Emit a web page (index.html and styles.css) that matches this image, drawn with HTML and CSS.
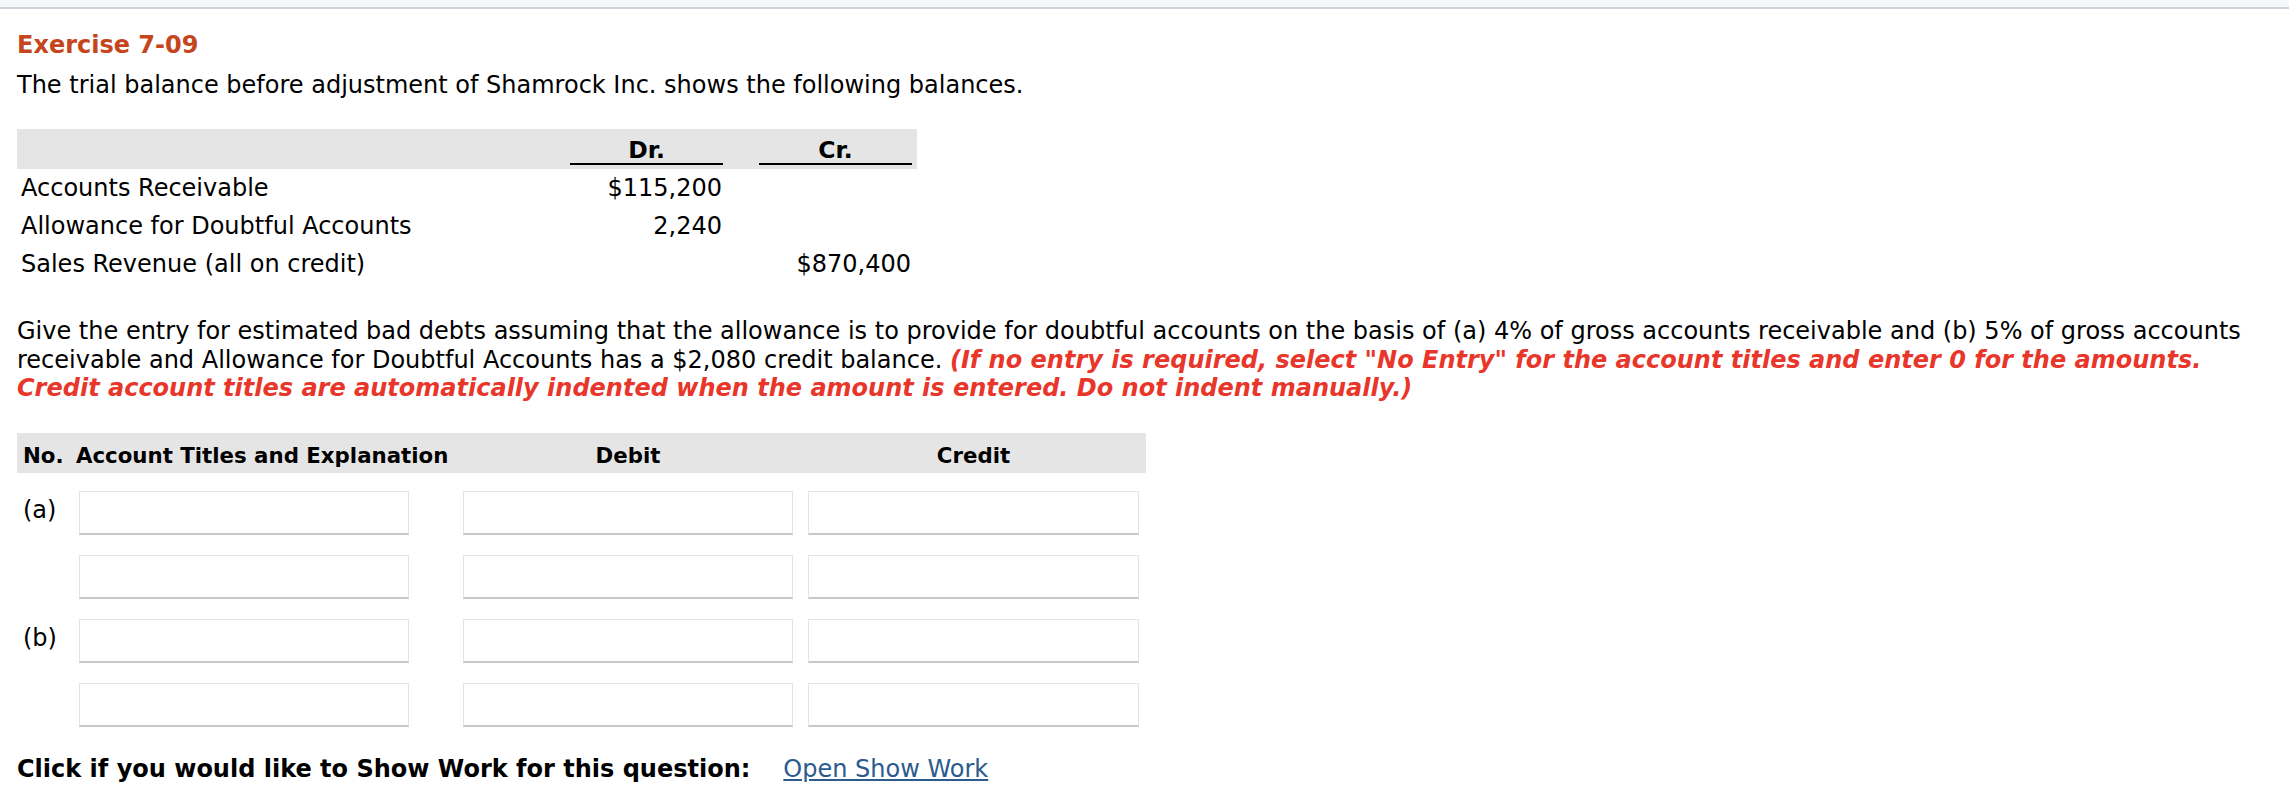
FILE: index.html
```html
<!DOCTYPE html>
<html lang="en">
<head>
<meta charset="utf-8">
<title>Exercise 7-09</title>
<link rel="stylesheet" href="styles.css">
</head>
<body>
<div class="topbar"></div>
<main class="content">
  <h2 class="title">Exercise 7-09</h2>
  <p class="intro">The trial balance before adjustment of Shamrock Inc. shows the following balances.</p>

  <div class="balances">
    <div class="bal-head">
      <div class="blank"></div>
      <div class="colhead">Dr.</div>
      <div class="colhead">Cr.</div>
    </div>
    <div class="bal-row">
      <div class="acct">Accounts Receivable</div>
      <div class="amt">$115,200</div>
      <div class="amt"></div>
    </div>
    <div class="bal-row">
      <div class="acct">Allowance for Doubtful Accounts</div>
      <div class="amt">2,240</div>
      <div class="amt"></div>
    </div>
    <div class="bal-row">
      <div class="acct">Sales Revenue (all on credit)</div>
      <div class="amt"></div>
      <div class="amt">$870,400</div>
    </div>
  </div>

  <p class="prompt">Give the entry for estimated bad debts assuming that the allowance is to provide for doubtful accounts on the basis of (a) 4% of gross accounts receivable and (b) 5% of gross accounts receivable and Allowance for Doubtful Accounts has a $2,080 credit balance. <em class="note">(If no entry is required, select "No Entry" for the account titles and enter 0 for the amounts. Credit account titles are automatically indented when the amount is entered. Do not indent manually.)</em></p>

  <div class="journal">
    <div class="j-head">
      <div class="h-no">No.</div>
      <div class="h-acct">Account Titles and Explanation</div>
      <div class="h-num">Debit</div>
      <div class="h-num">Credit</div>
    </div>
    <div class="j-body">
      <div class="label">(a)</div>
      <input class="field f-acct" type="text" aria-label="Account title (a) line 1">
      <input class="field" type="text" aria-label="Debit (a) line 1">
      <input class="field f-cr" type="text" aria-label="Credit (a) line 1">

      <div class="label"></div>
      <input class="field f-acct" type="text" aria-label="Account title (a) line 2">
      <input class="field" type="text" aria-label="Debit (a) line 2">
      <input class="field f-cr" type="text" aria-label="Credit (a) line 2">

      <div class="label">(b)</div>
      <input class="field f-acct" type="text" aria-label="Account title (b) line 1">
      <input class="field" type="text" aria-label="Debit (b) line 1">
      <input class="field f-cr" type="text" aria-label="Credit (b) line 1">

      <div class="label"></div>
      <input class="field f-acct" type="text" aria-label="Account title (b) line 2">
      <input class="field" type="text" aria-label="Debit (b) line 2">
      <input class="field f-cr" type="text" aria-label="Credit (b) line 2">
    </div>
  </div>

  <p class="showwork"><strong>Click if you would like to Show Work for this question:</strong><a href="#" class="swlink">Open Show Work</a></p>
</main>
</body>
</html>
```

FILE: styles.css
```css
html, body {
  margin: 0;
  padding: 0;
  background: #ffffff;
}

body {
  font-family: Verdana, "DejaVu Sans", sans-serif;
  font-size: 24px;
  color: #000000;
}

.topbar {
  height: 7px;
  background: #f6f7f9;
  border-bottom: 2px solid #cdd4de;
}

.content {
  padding: 0 17px;
}

.title {
  margin: 22px 0 0;
  font-size: 24px;
  font-weight: bold;
  line-height: 28.5px;
  color: #c5461c;
}

.intro {
  margin: 11.5px 0 0;
  line-height: 28.5px;
}

/* trial balance */
.balances {
  width: 900px;
  margin-top: 29px;
}

.bal-head,
.bal-row {
  display: grid;
  grid-template-columns: 517px 153px 153px;
  column-gap: 36px;
  padding-right: 5px;
}

.bal-head {
  background: #e5e5e5;
  padding-bottom: 4px;
  align-items: end;
  height: 40px;
  box-sizing: border-box;
}

.blank {
  height: 36px;
}

.colhead {
  height: 34px;
  border-bottom: 2px solid #000;
  display: flex;
  align-items: flex-end;
  justify-content: center;
  line-height: 1;
  font-size: 23.5px;
  font-weight: bold;
}

.bal-row {
  line-height: 38px;
}

.acct {
  padding-left: 4px;
  white-space: nowrap;
}

.amt {
  text-align: right;
  padding-right: 1px;
}

.prompt {
  margin: 34.5px 0 0;
  line-height: 28.5px;
}

.note {
  color: #e8362b;
  font-weight: bold;
  font-style: italic;
}

/* journal entry table */
.journal {
  width: 1129px;
  margin-top: 30px;
}

.j-head,
.j-body {
  display: grid;
  grid-template-columns: 47px 369px 330px 331px;
  column-gap: 15px;
  padding-right: 7px;
}

.j-head {
  background: #e5e5e5;
  height: 40px;
  box-sizing: border-box;
  padding-top: 10px;
  line-height: 26px;
  font-size: 21.3px;
  font-weight: bold;
  white-space: nowrap;
}

.h-no {
  padding-left: 6px;
}

.h-acct {
  margin-left: -3px;
}

.h-num {
  text-align: center;
}

.j-body {
  margin-top: 18px;
  row-gap: 20px;
}

.label {
  padding-left: 6px;
  padding-top: 5px;
  line-height: 28.5px;
}

.field {
  display: block;
  width: 330px;
  height: 44px;
  box-sizing: border-box;
  margin: 0;
  padding: 0 8px;
  border: 1px solid #e4e4e4;
  border-bottom: 2px solid #c8c8c8;
  border-radius: 0;
  background: #ffffff;
  font: inherit;
  outline: none;
}

.f-cr {
  width: 331px;
}

.showwork {
  margin: 28px 0 0;
  line-height: 28.5px;
  display: flex;
  column-gap: 33px;
}

.swlink {
  color: #2b5b8e;
  text-decoration: underline;
}
```
